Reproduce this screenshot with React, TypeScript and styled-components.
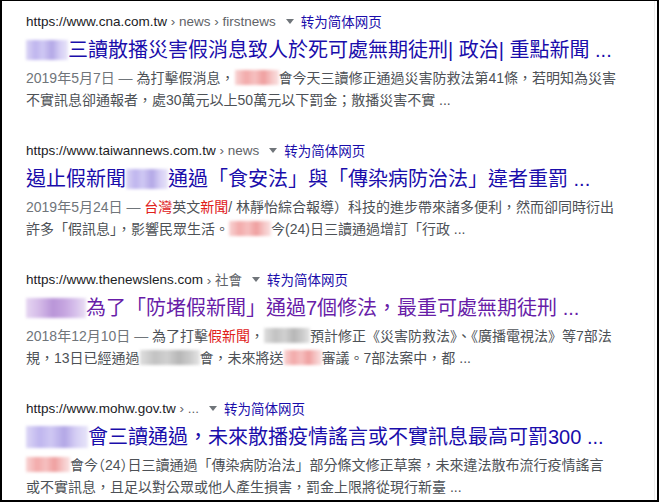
import React from "react";
import styled, { createGlobalStyle } from "styled-components";

const Global = createGlobalStyle`
  html, body { margin: 0; padding: 0; background: #fff; }
  body { font-family: "Liberation Sans", Arial, "Noto Sans CJK TC", sans-serif; }
`;

const Frame = styled.div`
  box-sizing: border-box;
  width: 659px;
  height: 502px;
  border-style: solid;
  border-color: #000;
  border-width: 1px 2px 2px 2px;
  background: #fff;
  overflow: hidden;
`;

const Inner = styled.div`
  box-sizing: border-box;
  height: 100%;
  border-right: 1px solid #ececec;
  margin-right: 2px;
  padding: 10px 0 0 24px;
  display: flex;
  flex-direction: column;
  gap: 29px;
`;

const Result = styled.div`
  display: flex;
  flex-direction: column;
`;

const UrlLine = styled.div`
  display: flex;
  align-items: center;
  height: 20px;
  font-size: 13.5px;
  color: #202124;
  white-space: nowrap;
  font-family: "Liberation Sans", Arial, "Noto Sans CJK TC", sans-serif;
`;

const Crumb = styled.span`
  color: #5f6368;
  white-space: pre;
`;

const Caret = styled.span`
  display: inline-block;
  width: 0;
  height: 0;
  margin: 1px 7px 0 10px;
  border-left: 4px solid transparent;
  border-right: 4px solid transparent;
  border-top: 5px solid #70757a;
`;

const Translate = styled.span`
  color: #1a0dab;
  font-family: "Noto Sans CJK SC", sans-serif;
  font-size: 13.5px;
`;

const Title = styled.div<{ $visited?: boolean }>`
  margin-top: 5px;
  height: 28px;
  line-height: 28px;
  font-size: 20px;
  color: ${(p) => (p.$visited ? "#681da8" : "#1a0dab")};
  white-space: nowrap;
  font-family: "Liberation Sans", Arial, "Noto Sans CJK TC", sans-serif;
`;

const Snippet = styled.div`
  margin-top: 3px;
  font-size: 14px;
  line-height: 22px;
  color: #4d5156;
  white-space: nowrap;
  font-family: "Liberation Sans", Arial, "Noto Sans CJK TC", sans-serif;
`;

const Date = styled.span`
  color: #70757a;
`;

const Hit = styled.span`
  color: #e0201a;
`;

const Half = styled.span`
  font-feature-settings: "halt";
`;

type Tone = "lavender" | "purple" | "pink" | "gray";

const tones: Record<Tone, string> = {
  lavender:
    "linear-gradient(90deg, #dcd7f6 0%, #bfb5ee 22%, #cfc8f3 40%, #b3a7e6 62%, #d4cdf4 80%, #e8e5f9 100%)",
  purple:
    "linear-gradient(90deg, #e6d6f2 0%, #d1b6e6 25%, #b995d8 45%, #c6a6e0 65%, #d9c4ec 85%, #ebe0f4 100%)",
  pink:
    "linear-gradient(90deg, #f8d4d4 0%, #f2aaaa 25%, #f6c0c0 45%, #ef9f9f 65%, #f6c9c9 85%, #fae2e2 100%)",
  gray:
    "linear-gradient(90deg, #dedede 0%, #c2c2c2 25%, #d0d0d0 45%, #b6b6b6 65%, #cdcdcd 85%, #e6e6e6 100%)",
};

const Redact = styled.span<{ $tone: Tone; $w: number; $h: number }>`
  display: inline-block;
  vertical-align: middle;
  width: ${(p) => p.$w}px;
  height: ${(p) => p.$h}px;
  margin-top: -3px;
  background: ${(p) => tones[p.$tone]};
  filter: blur(1.6px);
`;

export default function App() {
  return (
    <>
      <Global />
      <Frame>
        <Inner>
          <Result>
            <UrlLine>
              https://www.cna.com.tw<Crumb> › news › firstnews</Crumb>
              <Caret />
              <Translate>转为简体网页</Translate>
            </UrlLine>
            <Title>
              <Redact $tone="lavender" $w={42} $h={20} />
              三讀散播災害假消息致人於死可處無期徒刑| 政治| 重點新聞 ...
            </Title>
            <Snippet>
              <Date>2019年5月7日 — </Date>為打擊假消息，
              <Redact $tone="pink" $w={44} $h={15} />
              會今天三讀修正通過災害防救法第41條，若明知為災害
              <br />
              不實訊息卻通報者，處30萬元以上50萬元以下罰金；散播災害不實 ...
            </Snippet>
          </Result>

          <Result>
            <UrlLine>
              https://www.taiwannews.com.tw<Crumb> › news</Crumb>
              <Caret />
              <Translate>转为简体网页</Translate>
            </UrlLine>
            <Title>
              遏止假新聞
              <Redact $tone="lavender" $w={42} $h={20} />
              通過「食安法」與「傳染病防治法」違者重罰 ...
            </Title>
            <Snippet>
              <Date>2019年5月24日 — </Date>
              <Hit>台灣</Hit>英文<Hit>新聞</Hit>/ 林靜怡綜合報導）科技的進步帶來諸多便利，然而卻同時衍出
              <br />
              許多「假訊息」，影響民眾生活。
              <Redact $tone="pink" $w={42} $h={15} />
              今(24)日三讀通過增訂「行政 ...
            </Snippet>
          </Result>

          <Result>
            <UrlLine>
              https://www.thenewslens.com<Crumb> › 社會</Crumb>
              <Caret />
              <Translate>转为简体网页</Translate>
            </UrlLine>
            <Title $visited>
              <Redact $tone="purple" $w={60} $h={20} />
              為了「防堵假新聞」通過7個修法，最重可處無期徒刑 ...
            </Title>
            <Snippet>
              <Date>2018年12月10日 — </Date>為了打擊<Hit>假新聞</Hit>，
              <Redact $tone="gray" $w={46} $h={15} />
              預計修正《災害防救法》、《廣播電視法》等7部法
              <br />
              規，13日已經通過
              <Redact $tone="gray" $w={60} $h={15} />
              會，未來將送
              <Redact $tone="pink" $w={38} $h={15} />
              審議。7部法案中，都 ...
            </Snippet>
          </Result>

          <Result>
            <UrlLine>
              https://www.mohw.gov.tw<Crumb> › ...</Crumb>
              <Caret />
              <Translate>转为简体网页</Translate>
            </UrlLine>
            <Title>
              <Redact $tone="lavender" $w={62} $h={22} />
              會三讀通過，未來散播疫情謠言或不實訊息最高可罰300 ...
            </Title>
            <Snippet>
              <Redact $tone="pink" $w={44} $h={15} />
              會今<Half>（</Half>24<Half>）</Half>日三讀通過「傳染病防治法」部分條文修正草案，未來違法散布流行疫情謠言
              <br />
              或不實訊息，且足以對公眾或他人產生損害，罰金上限將從現行新臺 ...
            </Snippet>
          </Result>
        </Inner>
      </Frame>
    </>
  );
}
